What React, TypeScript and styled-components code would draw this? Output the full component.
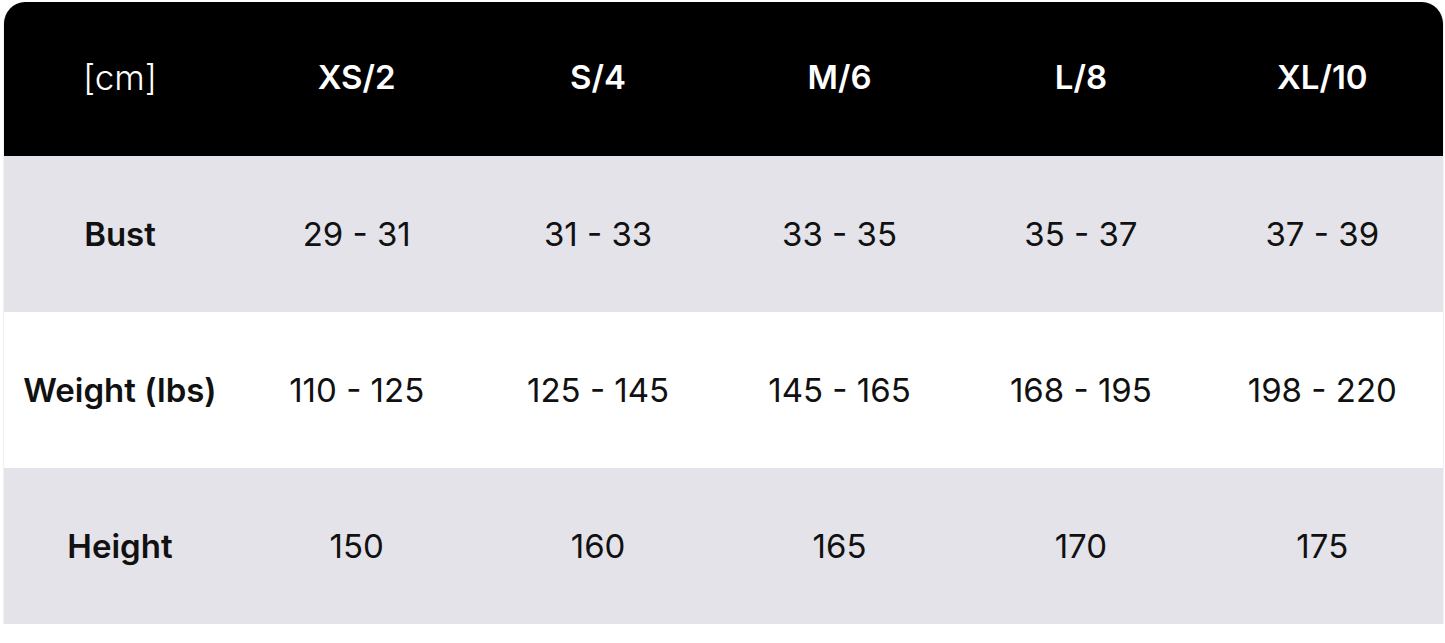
import React from 'react';
import styled, { createGlobalStyle } from 'styled-components';

const sizes = ['XS/2', 'S/4', 'M/6', 'L/8', 'XL/10'];

const rows = [
    { label: 'Bust', values: ['29 - 31', '31 - 33', '33 - 35', '35 - 37', '37 - 39'] },
    { label: 'Weight (lbs)', values: ['110 - 125', '125 - 145', '145 - 165', '168 - 195', '198 - 220'] },
    { label: 'Height', values: ['150', '160', '165', '170', '175'] },
];

const App: React.FC = () => {
    return (
        <>
            <GlobalStyle />
            <Page>
                <Table>
                    <HeaderRow>
                        <HeadCell unit>[cm]</HeadCell>
                        {sizes.map((size) => (
                            <HeadCell key={size}>{size}</HeadCell>
                        ))}
                    </HeaderRow>
                    {rows.map((row, i) => (
                        <BodyRow key={row.label} shaded={i % 2 === 0}>
                            <LabelCell>{row.label}</LabelCell>
                            {row.values.map((value, j) => (
                                <ValueCell key={j}>{value}</ValueCell>
                            ))}
                        </BodyRow>
                    ))}
                </Table>
            </Page>
        </>
    );
};

const GlobalStyle = createGlobalStyle`
  body {
    margin: 0;
    background: #fff;
    font-family: Inter, "Noto Sans", sans-serif;
  }
`;

const Page = styled.div`
  padding: 2px 3px 0 3px;
  width: 1445px;
  height: 643px;
  box-sizing: border-box;
`;

const Table = styled.div`
  width: 1439px;
  border-radius: 22px 22px 0 0;
  overflow: hidden;
  border-left: 1px solid #f1f1f4;
  border-right: 1px solid #f1f1f4;
`;

const Row = styled.div`
  display: grid;
  grid-template-columns: 232px repeat(5, 1fr);
  align-items: center;
`;

const HeaderRow = styled(Row)`
  background: #000;
  height: 154px;
  color: #fff;
`;

const BodyRow = styled(Row)<{ shaded: boolean }>`
  height: 156px;
  background: ${(props) => (props.shaded ? '#e4e3e9' : '#fff')};
  color: #111;
`;

const HeadCell = styled.div<{ unit?: boolean }>`
  text-align: center;
  font-size: ${(props) => (props.unit ? '35px' : '33px')};
  font-weight: ${(props) => (props.unit ? 300 : 600)};
  padding-bottom: 4px;
`;

const LabelCell = styled.div`
  text-align: center;
  font-size: 33px;
  font-weight: 600;
`;

const ValueCell = styled.div`
  text-align: center;
  font-size: 33px;
  font-weight: 400;
`;

export default App;
